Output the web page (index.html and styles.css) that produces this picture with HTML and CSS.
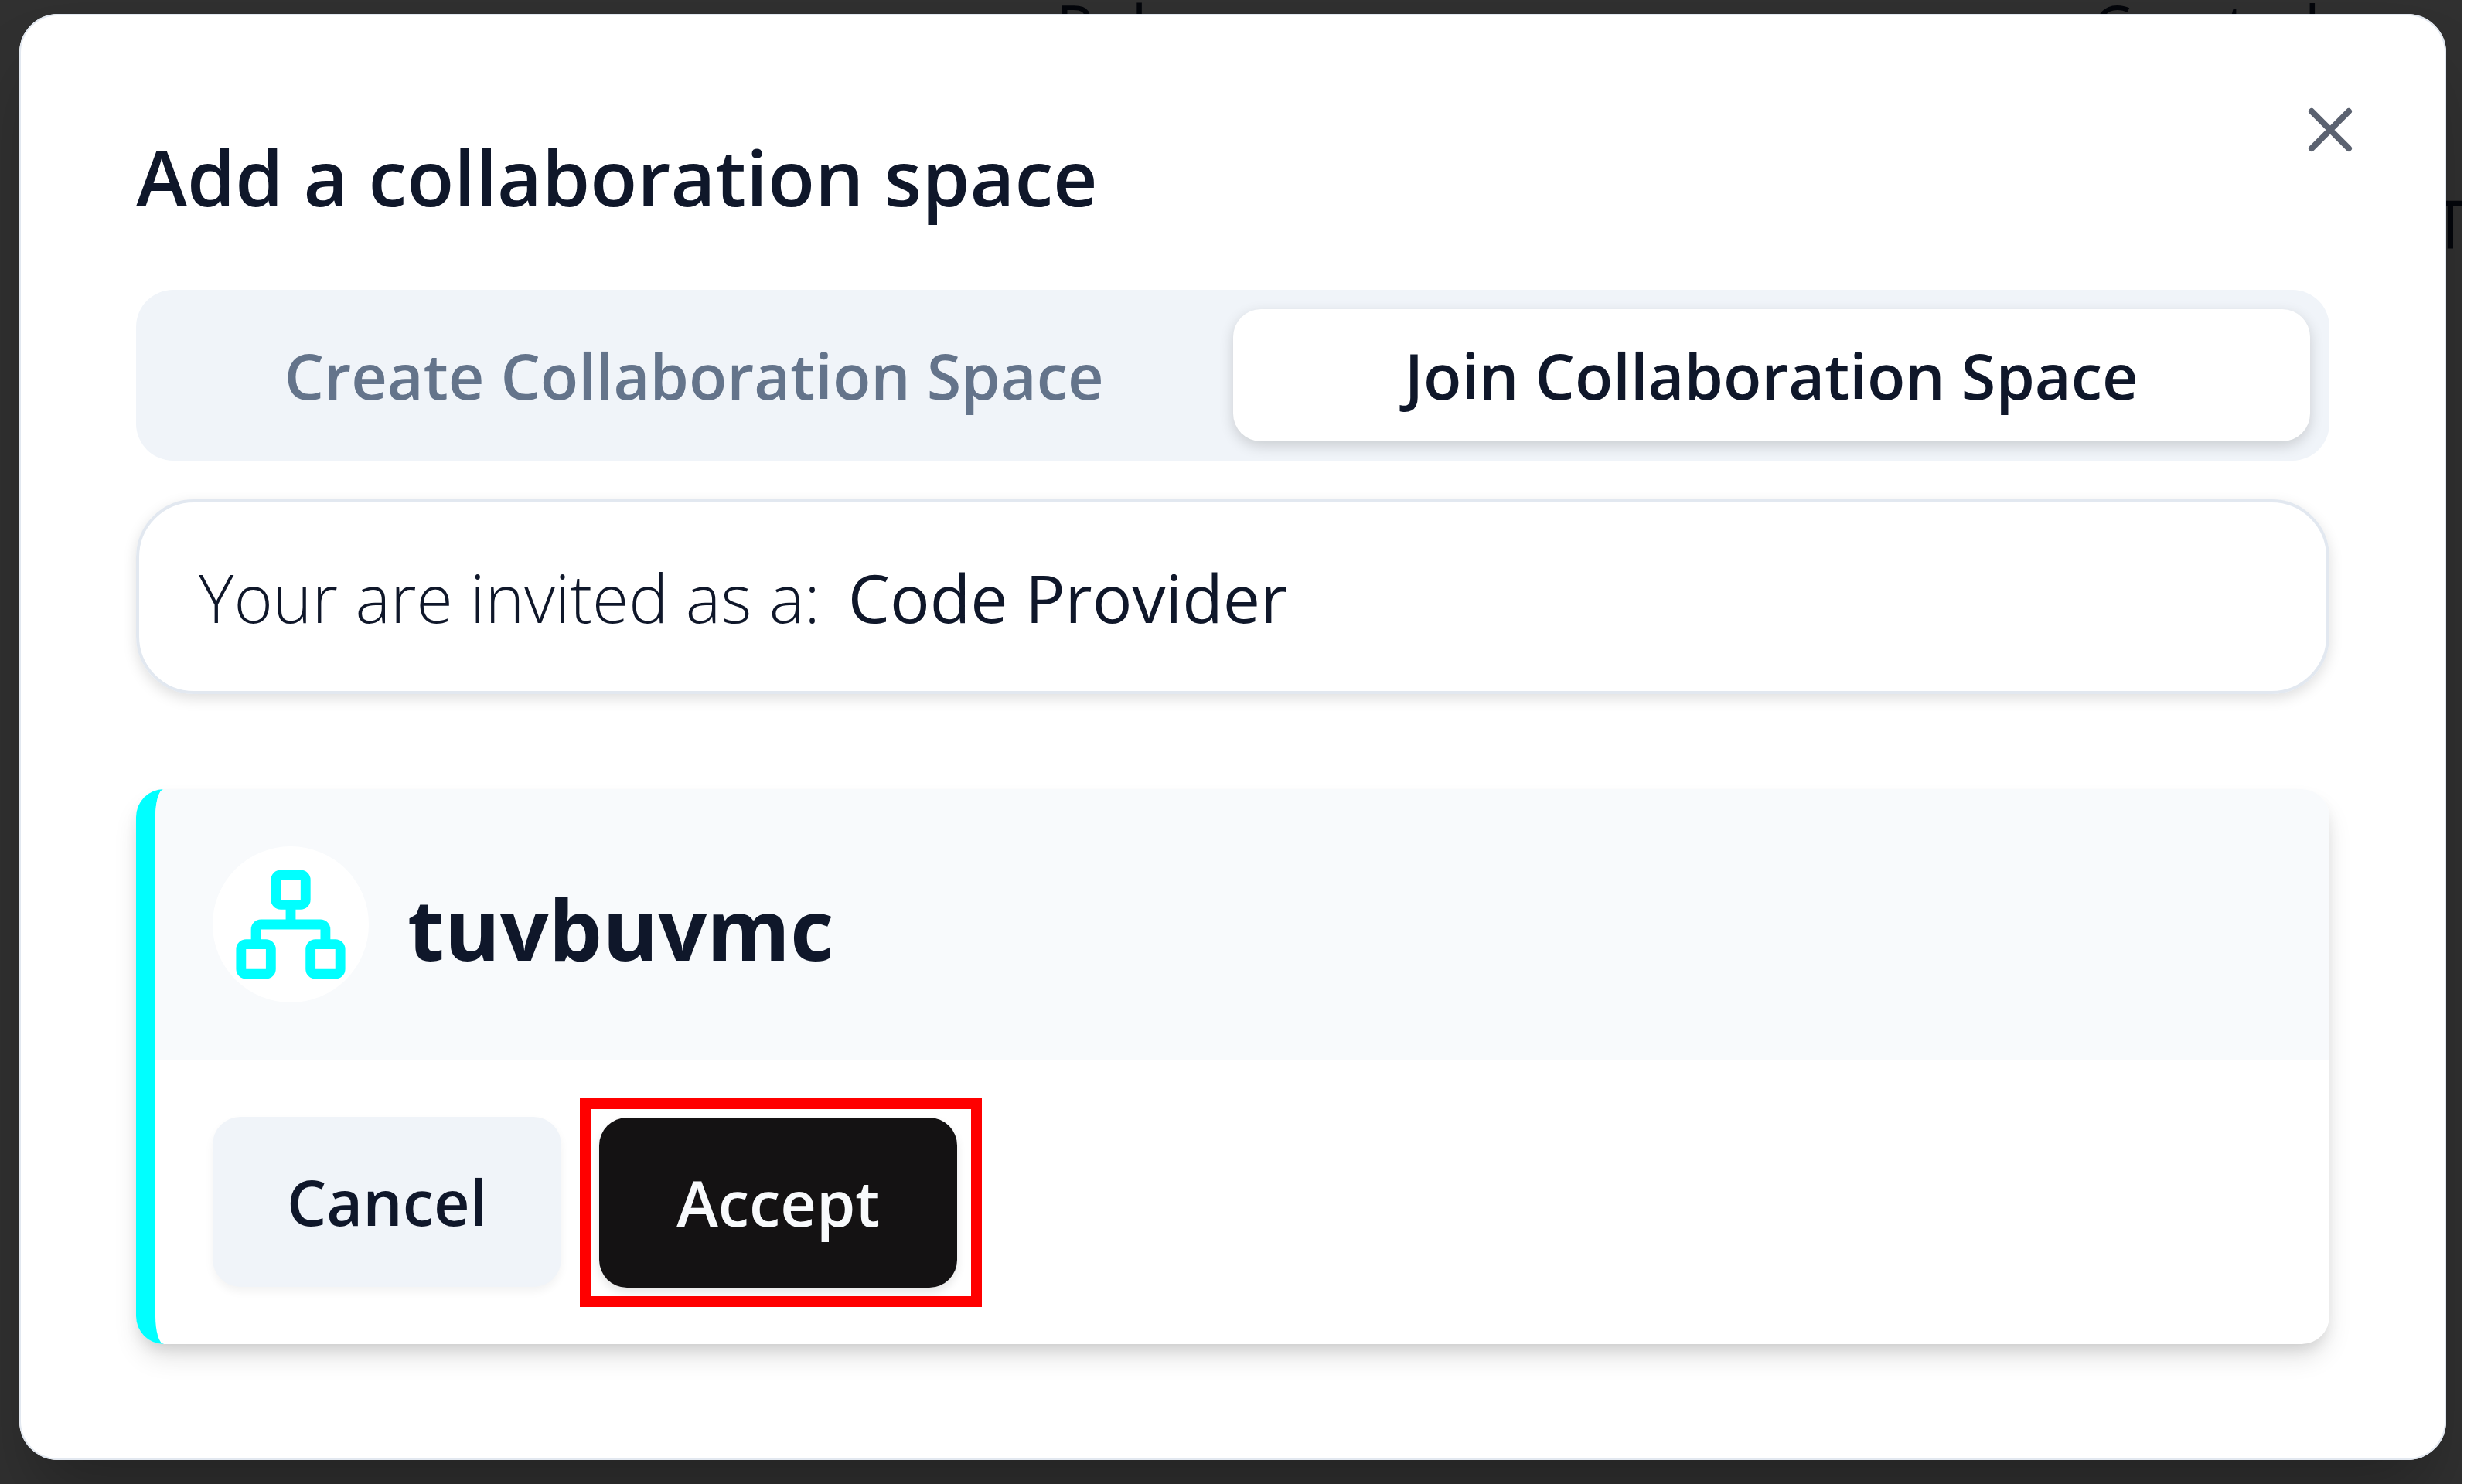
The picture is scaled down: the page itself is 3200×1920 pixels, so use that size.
FILE: index.html
```
<!DOCTYPE html>
<html lang="en">
<head>
<meta charset="utf-8">
<title>Add a collaboration space</title>
<link rel="stylesheet" href="styles.css">
</head>
<body>
<div class="backdrop" aria-hidden="true">
  <span class="col-role">Role</span>
  <span class="col-created">Created</span>
  <span class="col-cell">T</span>
</div>
<main class="dialog" role="dialog" aria-modal="true" aria-labelledby="dialog-title">
  <button class="close" type="button" aria-label="Close">
    <svg viewBox="0 0 24 24" fill="none" stroke="currentColor" stroke-width="2" stroke-linecap="round"><path d="M18 6 6 18M6 6l12 12"/></svg>
  </button>
  <h1 class="title" id="dialog-title">Add a collaboration space</h1>
  <div class="tabs" role="tablist">
    <button class="tab" type="button" role="tab" aria-selected="false">Create Collaboration Space</button>
    <button class="tab tab-active" type="button" role="tab" aria-selected="true">Join Collaboration Space</button>
  </div>
  <p class="invite"><span class="invite-label">Your are invited as a:</span><span class="invite-role">Code Provider</span></p>
  <section class="card">
    <header class="card-head">
      <span class="badge">
        <svg viewBox="0 0 24 24" fill="none" stroke="currentColor" stroke-width="2" stroke-linecap="round" stroke-linejoin="round"><rect x="16" y="16" width="6" height="6" rx="1"/><rect x="2" y="16" width="6" height="6" rx="1"/><rect x="9" y="2" width="6" height="6" rx="1"/><path d="M5 16v-3a1 1 0 0 1 1-1h12a1 1 0 0 1 1 1v3M12 12V8"/></svg>
      </span>
      <h2 class="card-title">tuvbuvmc</h2>
    </header>
    <div class="actions">
      <button class="btn btn-cancel" type="button">Cancel</button>
      <span class="highlight"><button class="btn btn-accept" type="button">Accept</button></span>
    </div>
  </section>
</main>
</body>
</html>
```
FILE: styles.css
```
* { box-sizing: border-box; margin: 0; }
body {
  position: relative;
  min-height: 100vh;
  padding: 18px 21px 32px 25px;
  background: #303030;
  border-right: 15px solid #fff;
  font-family: "Open Sans", "Noto Sans", sans-serif;
  color: #0f172a;
}
button { border: 0; font: inherit; color: inherit; }
svg { display: block; }
.backdrop { position: absolute; inset: 0; overflow: hidden; }
.backdrop span { position: absolute; color: #04060b; font-size: 80px; line-height: 88px; }
.backdrop .col-role { left: 1366px; top: -10px; }
.backdrop .col-created { right: 184px; top: -10px; }
.backdrop .col-cell { right: -8px; top: 244px; font-size: 86px; }
.dialog {
  position: relative;
  padding: 150px 151px;
  border-radius: 50px;
  background: #fff;
  box-shadow: 0 60px 90px -18px rgba(0, 0, 0, .25), inset 0 0 0 2px #e2e8f0;
}
.close {
  position: absolute;
  top: 102px;
  right: 102px;
  width: 96px;
  padding: 0;
  background: none;
  color: #5b6270;
}
.title { font-size: 100px; line-height: 120px; font-weight: 600; }
.tabs {
  display: grid;
  grid-template-columns: 1fr 1fr;
  margin-top: 87px;
  padding: 25px;
  border-radius: 48px;
  background: #f0f4f9;
}
.tab {
  padding: 36px 0 35px;
  border-radius: 36px;
  background: none;
  color: #64748b;
  font-size: 81px;
  line-height: 100px;
  font-weight: 600;
}
.tab-active { background: #fff; color: #0f172a; box-shadow: 0 6px 18px rgba(0, 0, 0, .16); }
.invite {
  display: flex;
  gap: 36px;
  margin-top: 50px;
  padding: 73px 77px 71px;
  border: 4px solid #e2e8f0;
  border-radius: 75px;
  box-shadow: 0 6px 18px rgba(0, 0, 0, .13);
  font-size: 86px;
  line-height: 100px;
}
.invite-label { font-weight: 300; }
.card {
  margin-top: 123px;
  border-left: 25px solid #0ff;
  border-radius: 36px;
  overflow: hidden;
  box-shadow: 0 20px 34px -4px rgba(0, 0, 0, .12), 0 10px 20px -6px rgba(0, 0, 0, .12);
}
.card-head {
  display: flex;
  align-items: center;
  gap: 50px;
  padding: 74px;
  background: #f8fafc;
}
.badge { padding: 24px; border-radius: 50%; background: #fff; color: #0ff; }
.badge svg { width: 154px; }
.card-title { padding-top: 8px; font-size: 110px; line-height: 120px; font-weight: 700; }
.actions { display: flex; align-items: flex-start; gap: 24px; padding: 50px 74px 48px; }
.btn {
  padding: 60px 96px;
  border-radius: 36px;
  font-size: 81px;
  line-height: 100px;
  font-weight: 600;
}
.btn-cancel { margin-top: 24px; background: #f0f4f9; box-shadow: 0 6px 12px rgba(0, 0, 0, .05); }
.btn-accept { display: block; padding: 60px 100px; background: #141213; color: #f8fafc; box-shadow: 0 6px 12px rgba(0, 0, 0, .1); }
.highlight { padding: 11px 18px 11px 11px; border: 14px solid #f00; }
```
